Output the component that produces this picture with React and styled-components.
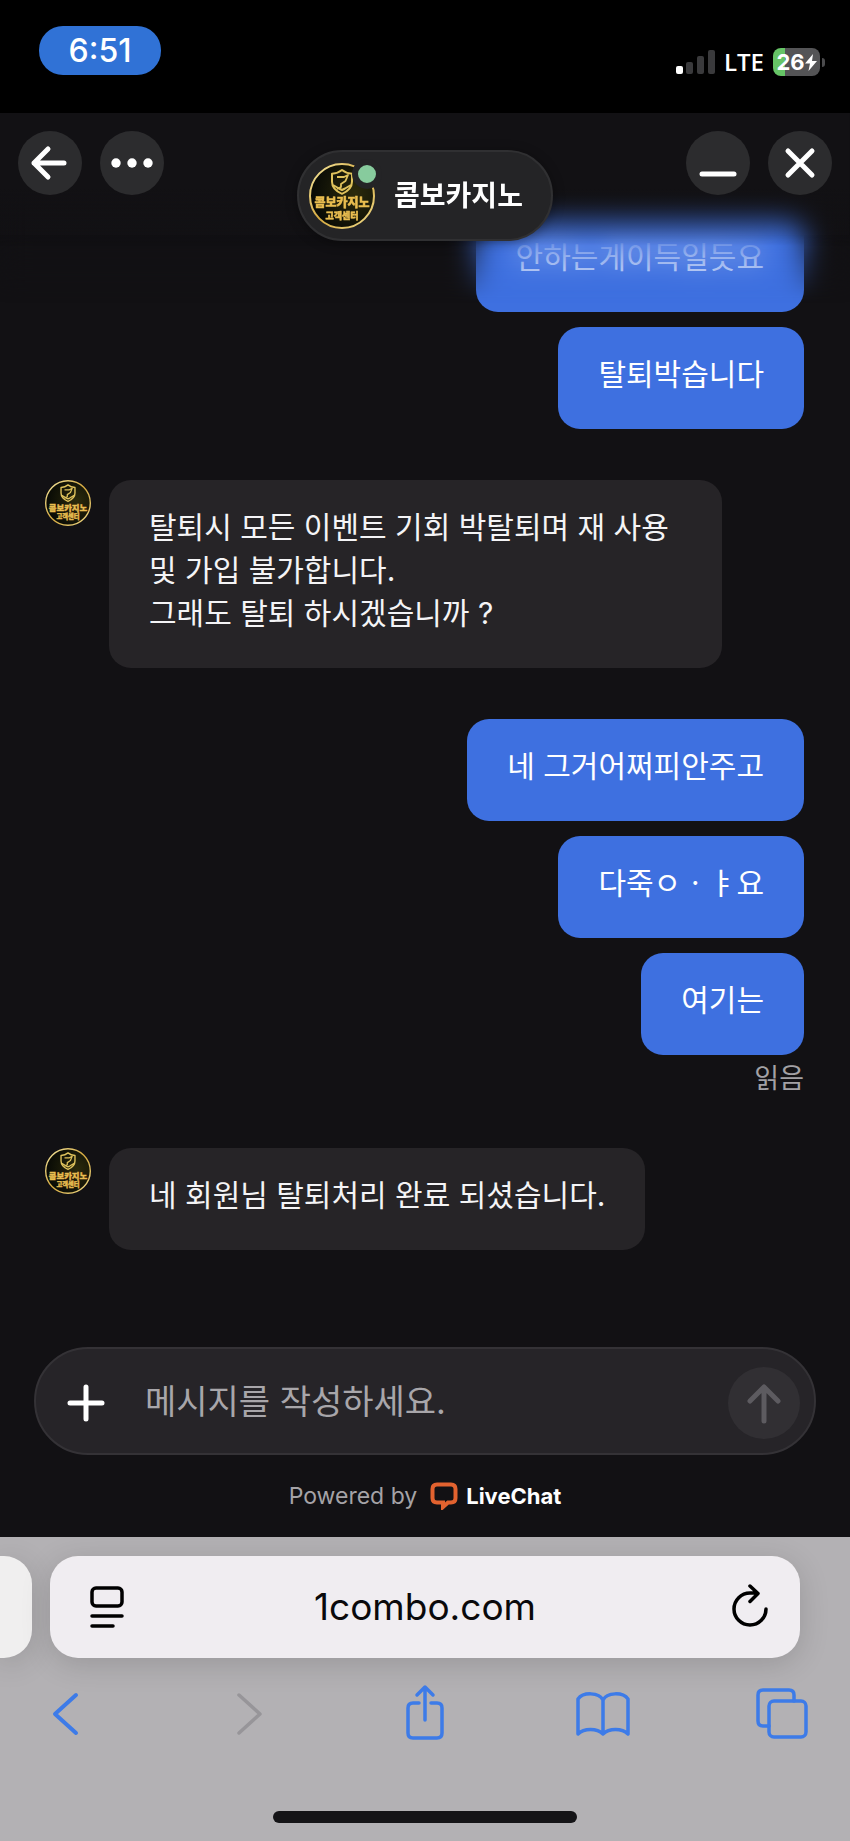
import React from 'react';
import styled, { createGlobalStyle, css } from 'styled-components';

const fontFamily = `Inter, 'Noto Sans CJK KR', sans-serif`;

const GlobalStyle = createGlobalStyle`
    * {
        box-sizing: border-box;
    }

    body {
        margin: 0;
        background: #121114;
        font-family: ${fontFamily};
    }

    button,
    input {
        margin: 0;
        padding: 0;
        border: 0;
        background: none;
        font-family: inherit;
    }

    svg {
        display: block;
    }
`;

const Screen = styled.div`
    display: flex;
    flex-direction: column;
    min-height: 100vh;
`;

const StatusBar = styled.div`
    display: flex;
    justify-content: space-between;
    align-items: flex-start;
    height: 113px;
    padding: 26px 25px 0 39px;
    background: #000;
    color: #fff;
`;

const Clock = styled.div`
    width: 122px;
    border-radius: 24px;
    background: #3072d6;
    font-size: 32px;
    font-weight: 500;
    line-height: 49px;
    text-align: center;
`;

const StatusIcons = styled.div`
    display: flex;
    align-items: center;
    gap: 9px;
    height: 28px;
    margin-top: 22px;
`;

const Network = styled.span`
    font-family: 'Open Sans', sans-serif;
    font-size: 24px;
    font-weight: 600;
    line-height: 28px;
`;

const Battery = styled.div`
    display: flex;
    align-items: center;
    gap: 2px;

    &:after {
        content: '';
        width: 3px;
        height: 9px;
        border-radius: 0 3px 3px 0;
        background: #4b4b4d;
    }
`;

const BatteryLevel = styled.div`
    display: flex;
    align-items: center;
    justify-content: center;
    width: 47px;
    height: 28px;
    border-radius: 8px;
    background: linear-gradient(to right, #66c466 25%, #545456 25%);
    font-size: 22px;
    font-weight: 700;
    line-height: 28px;
`;

const Chat = styled.main`
    position: relative;
    display: flex;
    flex: 1;
    flex-direction: column;
    background: #121114;
`;

const Header = styled.header`
    position: absolute;
    top: 0;
    left: 0;
    right: 0;
    z-index: 2;
    display: grid;
    grid-template-columns: 1fr auto 1fr;
    align-items: start;
    padding: 18px;
`;

const HeaderGroup = styled.div`
    display: flex;
    justify-content: ${({ $end }) => ($end ? 'flex-end' : 'flex-start')};
    gap: 18px;
`;

const RoundButton = styled.button`
    display: flex;
    align-items: center;
    justify-content: center;
    width: 64px;
    height: 64px;
    border-radius: 50%;
    background: #2c2c2e;
    color: #fff;
`;

const AgentPill = styled.div`
    display: flex;
    align-items: center;
    gap: 19px;
    height: 91px;
    margin-top: 19px;
    padding: 0 28px 0 10px;
    border: 2px solid #303032;
    border-radius: 46px;
    background: #242426;
    box-shadow: 0 2px 12px rgba(0, 0, 0, 0.35);
`;

const AgentName = styled.h1`
    margin: 0;
    color: #fff;
    font-size: 28px;
    font-weight: 700;
    line-height: 40px;
`;

const AvatarBox = styled.div`
    position: relative;
    flex: none;
    width: ${({ $size }) => $size}px;
    height: ${({ $size }) => $size}px;
`;

const Online = styled.span`
    position: absolute;
    top: -4px;
    right: -7px;
    width: 30px;
    height: 30px;
    border: 6px solid #242426;
    border-radius: 50%;
    background: #87cb9d;
`;

const HeaderBlur = styled.div`
    position: absolute;
    top: 0;
    left: 0;
    right: 0;
    z-index: 1;
    height: 190px;
    background: linear-gradient(to bottom, #121114 40%, transparent 70%);
    backdrop-filter: blur(14px);
    mask-image: linear-gradient(to bottom, #000 64%, transparent 100%);
    pointer-events: none;
`;

const Messages = styled.div`
    display: flex;
    flex: 1;
    flex-direction: column;
    gap: 51px;
    padding: 97px 46px 0 45px;
`;

const OwnGroup = styled.div`
    display: flex;
    flex-direction: column;
    align-items: flex-end;
    gap: 15px;
`;

const AgentRow = styled.div`
    display: flex;
    align-items: flex-start;
    gap: 18px;
`;

const Bubble = styled.div`
    padding: 26px 40px 33px;
    border-radius: 22px;
    background: #3e70e0;
    color: #fff;
    font-size: 30px;
    line-height: 43px;

    ${({ $agent }) =>
        $agent &&
        css`
            max-width: 613px;
            background: #262427;
            color: #f4f4f6;
        `};
`;

const ReadMark = styled.div`
    margin-top: -9px;
    color: #a3a1a5;
    font-size: 27px;
    line-height: 36px;
`;

const Composer = styled.form`
    display: flex;
    align-items: center;
    height: 108px;
    margin: 97px 34px 0;
    padding: 4px 14px 0 26px;
    border: 2px solid #343236;
    border-radius: 54px;
    background: #262428;
`;

const AddButton = styled.button`
    display: flex;
    align-items: center;
    justify-content: center;
    width: 48px;
    height: 48px;
    color: #fff;
`;

const MessageInput = styled.input`
    flex: 1;
    min-width: 0;
    margin: 0 20px 0 35px;
    padding-bottom: 3px;
    outline: 0;
    color: #fff;
    font-size: 34px;
    line-height: 50px;

    &::placeholder {
        color: #a8a6aa;
        opacity: 1;
    }
`;

const SendButton = styled(RoundButton)`
    width: 72px;
    height: 72px;
    background: #312f33;
    color: #5d5b60;
`;

const Powered = styled.footer`
    display: flex;
    align-items: center;
    justify-content: center;
    gap: 13px;
    height: 82px;
    color: #a5a3a7;
    font-size: 23px;
`;

const LiveChat = styled.a`
    display: flex;
    align-items: center;
    gap: 8px;
    color: #fff;
    font-size: 22px;
    font-weight: 700;
    text-decoration: none;
`;

const Browser = styled.footer`
    display: flex;
    flex-direction: column;
    align-items: stretch;
    padding-top: 19px;
    overflow: hidden;
    background: #b3b1b4;
`;

const Tabs = styled.div`
    display: flex;
    gap: 18px;
    padding-right: 50px;
`;

const NextTab = styled.div`
    width: 32px;
    border-radius: 0 28px 28px 0;
    background: #f0efef;
    box-shadow: 0 6px 30px rgba(0, 0, 0, 0.15);
`;

const AddressBar = styled.div`
    display: flex;
    flex: 1;
    align-items: center;
    height: 102px;
    padding: 0 28px;
    border-radius: 28px;
    background: #f0edf1;
    box-shadow: 0 6px 30px rgba(0, 0, 0, 0.15);
`;

const AddressButton = styled.button`
    display: flex;
    align-items: center;
    justify-content: center;
    width: 50px;
    height: 50px;
    color: #000;
`;

const Address = styled.input`
    flex: 1;
    min-width: 0;
    color: #0a090b;
    font-size: 37px;
    line-height: 48px;
    text-align: center;
`;

const Toolbar = styled.nav`
    display: flex;
    justify-content: space-between;
    padding: 25px 39px 0 35px;
`;

const ToolButton = styled.button`
    display: flex;
    align-items: center;
    justify-content: center;
    width: 60px;
    height: 60px;
    color: #3d7be8;

    &:disabled {
        color: #979599;
    }
`;

const HomeIndicator = styled.div`
    align-self: center;
    width: 304px;
    height: 12px;
    margin: 68px 0 18px;
    border-radius: 6px;
    background: #151417;
`;

const Icon = ({ size = 60, width = 3.5, children }) => (
    <svg
        width={size}
        height={size}
        viewBox={`0 0 ${size} ${size}`}
        fill="none"
        stroke="currentColor"
        strokeWidth={width}
        strokeLinecap="round"
        strokeLinejoin="round"
        aria-hidden="true"
    >
        {children}
    </svg>
);

const Avatar = ({ size, online }) => (
    <AvatarBox $size={size}>
        <svg width={size} height={size} viewBox="0 0 66 66">
            <defs>
                <linearGradient id={`gold${size}`} x1="0" y1="0" x2="1" y2="1">
                    <stop offset="0" stopColor="#f5e9a4" />
                    <stop offset="0.5" stopColor="#d5a93f" />
                    <stop offset="1" stopColor="#f0dc8c" />
                </linearGradient>
                <radialGradient id={`dark${size}`} cx="0.7" cy="0.45" r="0.7">
                    <stop offset="0" stopColor="#2b2a0c" />
                    <stop offset="1" stopColor="#070905" />
                </radialGradient>
            </defs>
            <circle
                cx="33"
                cy="33"
                r="32"
                fill={`url(#dark${size})`}
                stroke={`url(#gold${size})`}
                strokeWidth="2"
            />
            <g fill="none" stroke="#dfc25c" strokeWidth="2" strokeLinejoin="round">
                <path d="M33 7c3 2.500 6 3.500 10 3.800v8c0 5.500-4 9.500-10 12-6-2.500-10-6.500-10-12v-8c4-.3 7-1.300 10-3.800Z" />
                <path
                    d="M28 14h7l4-2-2.500 6-4.500 3v3l-4 2"
                    strokeWidth="1.800"
                />
                <path d="M24 22l6 3.500 3 1.500 3-1.500 6-3.500" />
            </g>
            <g
                fill="#e9bd50"
                stroke="#e9bd50"
                strokeWidth="0.500"
                fontFamily="Noto Sans CJK KR, sans-serif"
                fontWeight="900"
                textAnchor="middle"
            >
                <text x="33" y="44" fontSize="12">
                    콤보카지노
                </text>
                <text x="33" y="56" fontSize="9">
                    고객센터
                </text>
            </g>
        </svg>
        {online && <Online />}
    </AvatarBox>
);

const AgentMessage = ({ children }) => (
    <AgentRow>
        <Avatar size={46} />
        <Bubble $agent>{children}</Bubble>
    </AgentRow>
);

export default function App() {
    return (
        <Screen>
            <GlobalStyle />
            <StatusBar>
                <Clock>6:51</Clock>
                <StatusIcons>
                    <svg width="39" height="24" viewBox="0 0 39 24">
                        <rect x="0" y="16" width="7" height="8" rx="2" fill="#fff" />
                        <g fill="#3a3a3c">
                            <rect x="10" y="12" width="7" height="12" rx="2" />
                            <rect x="21" y="6" width="7" height="18" rx="2" />
                            <rect x="32" y="0" width="7" height="24" rx="2" />
                        </g>
                    </svg>
                    <Network>LTE</Network>
                    <Battery>
                        <BatteryLevel>
                            26
                            <svg width="12" height="17" viewBox="0 0 12 17">
                                <path d="M8 0 0 9.500h5L3.500 17 12 7H7Z" fill="#fff" />
                            </svg>
                        </BatteryLevel>
                    </Battery>
                </StatusIcons>
            </StatusBar>

            <Chat>
                <Header>
                    <HeaderGroup>
                        <RoundButton aria-label="뒤로">
                            <Icon size={64} width={5}>
                                <path d="M30 18 16 32l14 14M16 32h30" />
                            </Icon>
                        </RoundButton>
                        <RoundButton aria-label="더보기">
                            <Icon size={64} width={0}>
                                <g fill="currentColor">
                                    <circle cx="16" cy="32" r="4.700" />
                                    <circle cx="32" cy="32" r="4.700" />
                                    <circle cx="48" cy="32" r="4.700" />
                                </g>
                            </Icon>
                        </RoundButton>
                    </HeaderGroup>
                    <AgentPill>
                        <Avatar size={66} online />
                        <AgentName>콤보카지노</AgentName>
                    </AgentPill>
                    <HeaderGroup $end>
                        <RoundButton aria-label="최소화">
                            <Icon size={64} width={5}>
                                <path d="M16 43h32" />
                            </Icon>
                        </RoundButton>
                        <RoundButton aria-label="닫기">
                            <Icon size={64} width={5}>
                                <path d="m20 20 24 24M44 20 20 44" />
                            </Icon>
                        </RoundButton>
                    </HeaderGroup>
                </Header>
                <HeaderBlur />

                <Messages>
                    <OwnGroup>
                        <Bubble>안하는게이득일듯요</Bubble>
                        <Bubble>탈퇴박습니다</Bubble>
                    </OwnGroup>
                    <AgentMessage>
                        탈퇴시 모든 이벤트 기회 박탈퇴며 재 사용 및 가입 불가합니다.
                        <br />
                        그래도 탈퇴 하시겠습니까 ?
                    </AgentMessage>
                    <OwnGroup>
                        <Bubble>네 그거어쩌피안주고</Bubble>
                        <Bubble>다죽ㅇㆍㅑ요</Bubble>
                        <Bubble>여기는</Bubble>
                        <ReadMark>읽음</ReadMark>
                    </OwnGroup>
                    <AgentMessage>네 회원님 탈퇴처리 완료 되셨습니다.</AgentMessage>
                </Messages>

                <Composer>
                    <AddButton type="button" aria-label="첨부">
                        <Icon size={48} width={5}>
                            <path d="M24 8v32M8 24h32" />
                        </Icon>
                    </AddButton>
                    <MessageInput aria-label="메시지" placeholder="메시지를 작성하세요." />
                    <SendButton type="button" aria-label="보내기">
                        <Icon size={72} width={5}>
                            <path d="M36 54V20M22 34l14-14 14 14" />
                        </Icon>
                    </SendButton>
                </Composer>

                <Powered>
                    Powered by
                    <LiveChat href="#">
                        <svg width="28" height="28" viewBox="0 0 28 28">
                            <path
                                d="M7 2.500h14q4.500 0 4.500 4.500v9q0 4.500-4.500 4.500h-3l-5 4.500v-4.500H7q-4.500 0-4.500-4.500V7q0-4.500 4.500-4.500Z"
                                fill="none"
                                stroke="#e2622f"
                                strokeWidth="4"
                            />
                        </svg>
                        LiveChat
                    </LiveChat>
                </Powered>
            </Chat>

            <Browser>
                <Tabs>
                    <NextTab />
                    <AddressBar>
                        <AddressButton aria-label="페이지 메뉴">
                            <Icon size={50}>
                                <rect x="14" y="6" width="30" height="18" rx="4" />
                                <path d="M14 34h30M14 44h21" />
                            </Icon>
                        </AddressButton>
                        <Address aria-label="주소" defaultValue="1combo.com" />
                        <AddressButton aria-label="새로고침">
                            <Icon size={50}>
                                <path d="M44 27A16 16 0 1 1 28 11h7M28 4l8 7.500-8 8" />
                            </Icon>
                        </AddressButton>
                    </AddressBar>
                </Tabs>
                <Toolbar>
                    <ToolButton aria-label="이전">
                        <Icon width={4}>
                            <path d="M41 12 20 31l21 19" />
                        </Icon>
                    </ToolButton>
                    <ToolButton aria-label="다음" disabled>
                        <Icon>
                            <path d="m25 12 21 19-21 19" />
                        </Icon>
                    </ToolButton>
                    <ToolButton aria-label="공유">
                        <Icon>
                            <path d="M26 20h-6q-5 0-5 5v25q0 5 5 5h24q5 0 5-5V25q0-5-5-5h-6M32 37V4M24 12l8-8 8 8" />
                        </Icon>
                    </ToolButton>
                    <ToolButton aria-label="책갈피">
                        <Icon>
                            <path d="M31 17c-4-8-20-8-25-1v35c6-6 19-6 25 0 6-6 19-6 25 0V16c-5-7-21-7-25 1ZM31 17v34" />
                        </Icon>
                    </ToolButton>
                    <ToolButton aria-label="탭">
                        <Icon>
                            <rect x="18" y="18" width="37" height="36" rx="5" />
                            <path d="M18 43h-6q-5 0-5-5V12q0-5 5-5h26q5 0 5 5v6" />
                        </Icon>
                    </ToolButton>
                </Toolbar>
                <HomeIndicator />
            </Browser>
        </Screen>
    );
}
